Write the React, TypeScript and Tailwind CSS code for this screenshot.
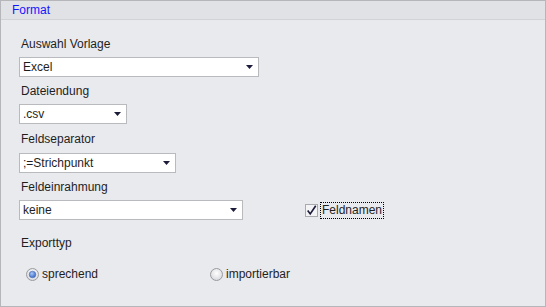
const Arrow = () => (
  <svg width="7" height="4" viewBox="0 0 7 4" className="shrink-0">
    <path d="M0 0 H7 L3.5 4 Z" fill="#1c1c3a" />
  </svg>
);

type SelectProps = {
  value: string;
  width: string;
};

const Select = ({ value, width }: SelectProps) => (
  <div
    className={`${width} h-[20px] flex items-center justify-between bg-white border border-[#b9babe] pl-[3px] pr-[5px] text-[12px] text-[#1e1e1e]`}
  >
    <span>{value}</span>
    <Arrow />
  </div>
);

const Radio = ({ checked }: { checked: boolean }) => (
  <svg width="13" height="13" viewBox="0 0 13 13" className="shrink-0">
    <defs>
      <radialGradient id="rbg" cx="50%" cy="40%" r="60%">
        <stop offset="0%" stopColor="#ffffff" />
        <stop offset="100%" stopColor="#d7d8dc" />
      </radialGradient>
      <radialGradient id="rdot" cx="40%" cy="35%" r="70%">
        <stop offset="0%" stopColor="#a9c8f5" />
        <stop offset="100%" stopColor="#2f5fc4" />
      </radialGradient>
    </defs>
    <circle cx="6.5" cy="6.5" r="6" fill="url(#rbg)" stroke="#9a9ba0" />
    {checked && <circle cx="6.5" cy="6.5" r="3.3" fill="url(#rdot)" stroke="#4a6fb8" strokeWidth="0.6" />}
  </svg>
);

const App = () => {
  return (
    <div
      className="w-[546px] h-[307px] bg-[#e9eaee] border border-[#b5b6ba] flex flex-col"
      style={{ fontFamily: '"Liberation Sans", Arial, sans-serif' }}
    >
      <div className="h-[19px] bg-[#e1e2e6] border-b border-[#d2d3d7] flex items-center pl-[11px] text-[12px] text-[#1515ff]">
        Format
      </div>
      <div className="flex flex-col pl-[18px] text-[12px] text-[#1e1e1e]">
        <div className="h-[16px] leading-[16px] mt-[16px] ml-[2px]">Auswahl Vorlage</div>
        <div className="mt-[5px]">
          <Select value="Excel" width="w-[240px]" />
        </div>
        <div className="h-[16px] leading-[16px] mt-[6px] ml-[2px]">Dateiendung</div>
        <div className="mt-[5px]">
          <Select value=".csv" width="w-[108px]" />
        </div>
        <div className="h-[16px] leading-[16px] mt-[7px] ml-[2px]">Feldseparator</div>
        <div className="mt-[6px]">
          <Select value=";=Strichpunkt" width="w-[157px]" />
        </div>
        <div className="h-[16px] leading-[16px] mt-[6px] ml-[2px]">Feldeinrahmung</div>
        <div className="mt-[5px] flex items-center">
          <Select value="keine" width="w-[224px]" />
          <div className="ml-[62px] flex items-center">
            <div className="w-[13px] h-[13px] bg-[#f4f4f6] border border-[#a9aaae] flex items-center justify-center">
              <svg width="13" height="13" viewBox="0 0 13 13">
                <path d="M2 6.5 L5 10.5 L11.5 1" fill="none" stroke="#1c1c3a" strokeWidth="2" />
              </svg>
            </div>
            <span className="ml-[2px] px-[1px] leading-[15px] border border-dotted border-black">Feldnamen</span>
          </div>
        </div>
        <div className="h-[16px] leading-[16px] mt-[15px] ml-[2px]">Exporttyp</div>
        <div className="mt-[14px] ml-[7px] flex items-center">
          <div className="w-[184px] flex items-center">
            <Radio checked={true} />
            <span className="ml-[3px]">sprechend</span>
          </div>
          <div className="flex items-center">
            <Radio checked={false} />
            <span className="ml-[3px]">importierbar</span>
          </div>
        </div>
      </div>
    </div>
  );
};

export default App;
